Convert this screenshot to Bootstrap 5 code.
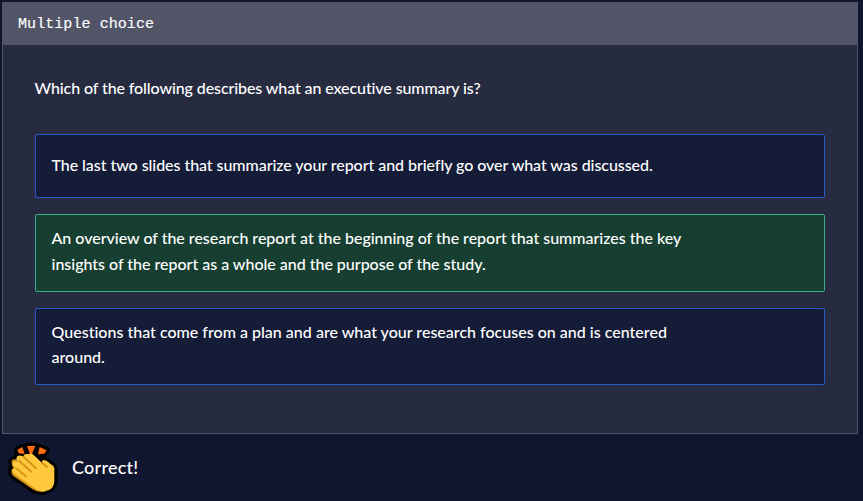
<!DOCTYPE html>
<html lang="en">
<head>
<meta charset="utf-8">
<meta name="viewport" content="width=device-width, initial-scale=1">
<title>Multiple choice</title>
<link href="https://cdn.jsdelivr.net/npm/bootstrap@5.3.0/dist/css/bootstrap.min.css" rel="stylesheet">
<style>
  body { background: #10162f; color: #fff; font: 500 16px/25.6px Lato, "Open Sans", sans-serif; height: 501px; overflow: hidden; }
  .quiz { width: 856px; height: 432px; margin: 2px 0 0 2px; background: #272b40; border: 1px solid #515567; }
  .quiz-title { height: 42px; background: #515567; font: 15px/43px "Liberation Mono", monospace; -webkit-text-stroke: .15px #fff; letter-spacing: .07px; padding-left: 15px; }
  .quiz-body { padding: 30px 32px 0; }
  .question { letter-spacing: -.1px; margin: 0 0 33.8px -.5px; }
  .choice { min-height: 64px; background: #151c38; border: 1px solid #2858cb; border-radius: 2px; padding: 10px 16px 14px 15.5px; color: #fff; font-weight: 500; letter-spacing: .01px; }
  .choice.single { padding-top: 10px; padding-bottom: 13px; letter-spacing: -.055px; }
  .choice.correct { background: #173f31; border-color: #3bb08a; letter-spacing: -.015px; }
  .choice span { white-space: nowrap; }
  .result { height: 67px; padding-left: 4px; }
  .result-text { font-size: 18px; letter-spacing: .25px; margin: 0 0 0 8px; }
</style>
</head>
<body>
<main>
  <section class="quiz">
    <header class="quiz-title">Multiple choice</header>
    <div class="quiz-body">
      <p class="question">Which of the following describes what an executive summary is?</p>
      <div class="d-flex flex-column gap-3">
        <button class="choice single text-start d-flex flex-column justify-content-center align-items-start"><span>The last two slides that summarize your report and briefly go over what was discussed.</span></button>
        <button class="choice correct text-start d-flex flex-column justify-content-center align-items-start"><span>An overview of the research report at the beginning of the report that summarizes the key</span><span>insights of the report as a whole and the purpose of the study.</span></button>
        <button class="choice text-start d-flex flex-column justify-content-center align-items-start"><span>Questions that come from a plan and are what your research focuses on and is centered</span><span>around.</span></button>
      </div>
    </div>
  </section>
  <footer class="result d-flex align-items-center">
    <svg width="60" height="60" viewBox="0 0 180 180" aria-hidden="true">
      <defs>
        <g id="clap">
          <path fill="#ff6b0f" d="M40 35L55 27 62 48 44 46zM69 24H94L84 48H78zM107 27L128 37 121 47 102 49z"/>
          <path fill="#d89418" d="M23 94Q28 88 36 93L95 140 125 160Q104 165 86 154L28 114Q20 107 23 94zM24 78Q18 64 35 64L52 92 34 94Q24 88 24 78z"/>
          <path fill="#ffc83d" d="M37 63Q38 51 51 53L57 55Q62 45 75 49 81 43 90 52L115 76Q111 67 121 66 130 68 137 76 148 82 151 91V128Q151 149 133 157 111 166 91 151L31 107Q20 96 30 91L38 92 27 83Q22 71 35 70L42 73Q35 69 37 63z"/>
        </g>
      </defs>
      <use href="#clap" stroke="#000" stroke-width="19" stroke-linejoin="round"/>
      <use href="#clap"/>
      <path fill="none" stroke="#d89418" stroke-width="6" stroke-linecap="round" d="M59 57L96 91M46 69L82 101M39 92L65 115M115 76L129 87"/>
    </svg>
    <span class="result-text">Correct!</span>
  </footer>
</main>
<script src="https://cdn.jsdelivr.net/npm/bootstrap@5.3.0/dist/js/bootstrap.bundle.min.js"></script>
</body>
</html>
